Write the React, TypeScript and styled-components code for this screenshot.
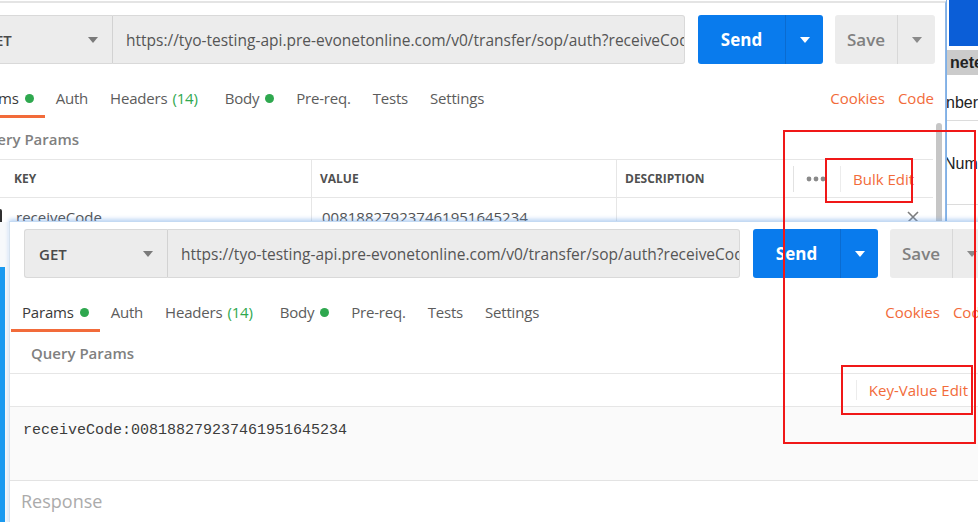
import React from 'react';
import styled, { createGlobalStyle } from 'styled-components';

const GlobalStyle = createGlobalStyle`
  html, body {
    margin: 0;
    padding: 0;
    background: #ffffff;
  }
  body {
    font-family: 'Open Sans', 'Noto Sans', sans-serif;
  }
`;

const ORANGE = '#f26b3a';
const GREEN = '#2fa84f';

const tabs = [
  { id: 'params', label: 'Params', dot: true },
  { id: 'auth', label: 'Auth' },
  { id: 'headers', label: 'Headers', count: 14 },
  { id: 'body', label: 'Body', dot: true },
  { id: 'prereq', label: 'Pre-req.' },
  { id: 'tests', label: 'Tests' },
  { id: 'settings', label: 'Settings' },
];

const requestUrl =
  'https://tyo-testing-api.pre-evonetonline.com/v0/transfer/sop/auth?receiveCode=008188279237461951645234';

const param = { key: 'receiveCode', value: '008188279237461951645234' };

// 요청 창 (위/아래 공통)
const RequestWindow: React.FC<{ front?: boolean; children: React.ReactNode }> = ({ front, children }) => (
  <Window $front={front}>
    <RequestBar>
      <MethodSelect>
        <MethodText>GET</MethodText>
        <Caret $color="#7a7a7a" />
      </MethodSelect>
      <UrlInput>{requestUrl}</UrlInput>
      <SendButton>
        <SendLabel>Send</SendLabel>
        <SplitPart $dark>
          <Caret $color="#ffffff" />
        </SplitPart>
      </SendButton>
      <SaveButton>
        <SaveLabel>Save</SaveLabel>
        <SplitPart>
          <Caret $color="#8a8a8a" />
        </SplitPart>
      </SaveButton>
    </RequestBar>

    <TabBar>
      <TabList>
        {tabs.map((tab) => (
          <Tab key={tab.id} $active={tab.id === 'params'}>
            {tab.label}
            {tab.count !== undefined && <Count>({tab.count})</Count>}
            {tab.dot && <Dot />}
          </Tab>
        ))}
      </TabList>
      <TabLinks>
        <LinkText>Cookies</LinkText>
        <LinkText>Code</LinkText>
      </TabLinks>
    </TabBar>

    <SectionTitle>Query Params</SectionTitle>
    {children}
  </Window>
);

const ParamsTable: React.FC = () => (
  <Table>
    <HeadCell />
    <HeadCell $line>KEY</HeadCell>
    <HeadCell $line>VALUE</HeadCell>
    <HeadCell>DESCRIPTION</HeadCell>
    <ActionsCell>
      <ShortRule />
      <MoreDots width="20" height="6" viewBox="0 0 20 6">
        <circle cx="3" cy="3" r="2.4" />
        <circle cx="10" cy="3" r="2.4" />
        <circle cx="17" cy="3" r="2.4" />
      </MoreDots>
      <ShortRule $light />
      <LinkText>Bulk Edit</LinkText>
    </ActionsCell>

    <RowCell $center>
      <Checkbox />
    </RowCell>
    <RowCell $line>{param.key}</RowCell>
    <RowCell $line>{param.value}</RowCell>
    <RowCell />
    <RowCell $end>
      <svg width="12" height="12" viewBox="0 0 12 12">
        <path d="M1 1L11 11M11 1L1 11" stroke="#7c7c7c" strokeWidth="1.6" />
      </svg>
    </RowCell>
  </Table>
);

const BulkEditor: React.FC = () => (
  <>
    <BulkToolbar>
      <ShortRule $light />
      <LinkText>Key-Value Edit</LinkText>
    </BulkToolbar>
    <BulkText>
      {param.key}:{param.value}
    </BulkText>
    <ResponseTitle>Response</ResponseTitle>
  </>
);

const App: React.FC = () => (
  <>
    <GlobalStyle />
    <Desktop>
      <BackSlot>
        <RequestWindow>
          <ParamsTable />
        </RequestWindow>
        <Scrollbar />
      </BackSlot>

      <SideWindow>
        <SideTitle />
        <SideHeader>nete</SideHeader>
        <SideRow $height={46} $top={18} $shift={-1}>nber</SideRow>
        <SideRow $height={84} $top={33} $shift={-3}>Num</SideRow>
      </SideWindow>

      <LeftGap>
        <BlueStrip />
      </LeftGap>

      <FrontSlot>
        <RequestWindow front>
          <BulkEditor />
        </RequestWindow>
      </FrontSlot>

      <Annotation $x={783} $y={130} $w={193} $h={314} />
      <Annotation $x={825} $y={158} $w={88} $h={45} />
      <Annotation $x={841} $y={365} $w={132} $h={50} />
    </Desktop>
  </>
);

/* 데스크톱 (창들이 겹쳐 있는 화면) */
const Desktop = styled.div`
  position: relative;
  width: 978px;
  height: 522px;
  overflow: hidden;
  background: #ffffff;
`;

const BackSlot = styled.div`
  position: absolute;
  left: -45px;
  top: 1px;
  height: 221px;
  overflow: hidden;
`;

const FrontSlot = styled.div`
  position: absolute;
  left: 9px;
  top: 221px;
  height: 320px;
`;

const Window = styled.div<{ $front?: boolean }>`
  width: 991px;
  box-sizing: border-box;
  background: #ffffff;
  border-top: ${({ $front }) => ($front ? '1px solid #c4daf3' : '2px solid #e4e4e4')};
  border-right: ${({ $front }) => ($front ? 'none' : '1px solid #8db6e6')};
  border-left: ${({ $front }) => ($front ? '1px solid #d6e2ee' : 'none')};
  padding-top: ${({ $front }) => ($front ? 7 : 12)}px;
  height: ${({ $front }) => ($front ? '320px' : '240px')};
  box-shadow: ${({ $front }) => ($front ? '0 -2px 4px rgba(110, 165, 230, 0.45)' : 'none')};
`;

const Scrollbar = styled.div`
  position: absolute;
  left: 981px;
  top: 122px;
  width: 6px;
  height: 110px;
  border-radius: 3px;
  background: #c6c6c6;
`;

/* 요청 바 */
const RequestBar = styled.div`
  display: flex;
  align-items: stretch;
  height: 49px;
  padding: 0 11px 0 14px;
`;

const MethodSelect = styled.div`
  flex: none;
  width: 144px;
  box-sizing: border-box;
  display: flex;
  align-items: center;
  justify-content: space-between;
  padding: 0 14px;
  background: #ececec;
  border: 1px solid #d9d9d9;
  border-right: 1px solid #d2d2d2;
  border-radius: 3px 0 0 3px;
`;

const MethodText = styled.span`
  font-size: 15px;
  font-weight: 600;
  color: #4a4a4a;
`;

const Caret = styled.span<{ $color: string }>`
  width: 0;
  height: 0;
  border-left: 5px solid transparent;
  border-right: 5px solid transparent;
  border-top: 6px solid ${({ $color }) => $color};
`;

const UrlInput = styled.div`
  flex: none;
  width: 572px;
  box-sizing: border-box;
  display: flex;
  align-items: center;
  padding: 0 2px 0 13px;
  background: #ececec;
  border: 1px solid #d9d9d9;
  border-left: none;
  border-radius: 0 3px 3px 0;
  font-size: 15.5px;
  color: #555555;
  white-space: nowrap;
  overflow: hidden;
`;

const SendButton = styled.div`
  flex: none;
  width: 125px;
  margin-left: 13px;
  display: flex;
  background: #097bed;
  border-radius: 3px;
`;

const SendLabel = styled.span`
  width: 87px;
  display: flex;
  align-items: center;
  justify-content: center;
  color: #ffffff;
  font-size: 17px;
  font-weight: 700;
`;

const SplitPart = styled.span<{ $dark?: boolean }>`
  flex: 1;
  display: flex;
  align-items: center;
  justify-content: center;
  border-left: 1px solid ${({ $dark }) => ($dark ? '#0a6bd0' : '#d8d8d8')};
`;

const SaveButton = styled.div`
  flex: none;
  width: 100px;
  margin-left: 12px;
  display: flex;
  background: #ececec;
  border-radius: 3px;
`;

const SaveLabel = styled.span`
  width: 62px;
  display: flex;
  align-items: center;
  justify-content: center;
  color: #808080;
  font-size: 17px;
  font-weight: 600;
`;

/* 탭 */
const TabBar = styled.div`
  display: flex;
  justify-content: space-between;
  margin-top: 20px;
  padding: 0 11px 0 1px;
`;

const TabList = styled.div`
  display: flex;
`;

const Tab = styled.div<{ $active?: boolean }>`
  display: flex;
  align-items: center;
  padding: 4px 11px 7px;
  border-bottom: 3px solid ${({ $active }) => ($active ? ORANGE : 'transparent')};
  font-size: 15px;
  line-height: 20px;
  letter-spacing: -0.2px;
  color: ${({ $active }) => ($active ? '#3a3a3a' : '#5c5c5c')};
  white-space: nowrap;
`;

const Count = styled.span`
  margin-left: 5px;
  margin-right: 5px;
  color: ${GREEN};
`;

const Dot = styled.span`
  width: 9px;
  height: 9px;
  margin-left: 6px;
  border-radius: 50%;
  background: ${GREEN};
`;

const TabLinks = styled.div`
  display: flex;
  gap: 13px;
  padding-top: 4px;
  line-height: 20px;
`;

const LinkText = styled.span`
  font-size: 15px;
  line-height: 20px;
  color: ${ORANGE};
  white-space: nowrap;
`;

const SectionTitle = styled.div`
  padding: 11px 0 10px 21px;
  font-size: 15px;
  font-weight: 600;
  line-height: 20px;
  color: #808080;
  border-bottom: 1px solid #e6e6e6;
  width: 978px;
  box-sizing: border-box;
`;

/* 키-값 테이블 */
const Table = styled.div`
  display: grid;
  grid-template-columns: 51px 306px 305px 176px 140px;
  width: 978px;
`;

const HeadCell = styled.div<{ $line?: boolean }>`
  height: 37px;
  display: flex;
  align-items: center;
  padding-left: 8px;
  border-bottom: 1px solid #e6e6e6;
  border-right: ${({ $line }) => ($line ? '1px solid #e6e6e6' : 'none')};
  font-size: 12px;
  font-weight: 700;
  color: #505050;
`;

const ActionsCell = styled.div`
  height: 37px;
  display: flex;
  align-items: center;
  border-bottom: 1px solid #e6e6e6;
  font-size: 15px;

  & > svg {
    margin: 0 14px 0 12px;
  }

  & > span:last-child {
    margin-left: 12px;
  }
`;

const ShortRule = styled.span<{ $light?: boolean }>`
  width: 1px;
  height: 26px;
  background: ${({ $light }) => ($light ? '#ececec' : '#e2e2e2')};
`;

const MoreDots = styled.svg`
  fill: #8a8a8a;
`;

const RowCell = styled.div<{ $line?: boolean; $center?: boolean; $end?: boolean }>`
  height: 37px;
  display: flex;
  align-items: center;
  justify-content: ${({ $center, $end }) => ($center || $end ? 'flex-end' : 'flex-start')};
  padding: 0 ${({ $center, $end }) => ($center ? 4 : $end ? 14 : 0)}px 0 ${({ $center, $end }) => ($center || $end ? 0 : 10)}px;
  border-right: ${({ $line }) => ($line ? '1px solid #e6e6e6' : 'none')};
  font-size: 15px;
  color: #505050;
  white-space: nowrap;
`;

const Checkbox = styled.span`
  width: 16px;
  height: 16px;
  border-radius: 2px;
  background: #303030;
`;

/* 벌크 편집 */
const BulkToolbar = styled.div`
  width: 978px;
  box-sizing: border-box;
  height: 33px;
  display: flex;
  align-items: center;
  justify-content: flex-end;
  gap: 12px;
  padding-right: 20px;
  border-bottom: 1px solid #e6e6e6;

  & > span:first-child {
    height: 20px;
  }
`;

const BulkText = styled.div`
  width: 978px;
  height: 74px;
  box-sizing: border-box;
  padding: 14px 14px 0 13px;
  background: #fafafa;
  border-bottom: 1px solid #e3e3e3;
  font-family: 'Liberation Mono', 'DejaVu Sans Mono', monospace;
  font-size: 15px;
  line-height: 20px;
  color: #3c3c3c;
`;

const ResponseTitle = styled.div`
  padding: 9px 11px;
  font-size: 18px;
  line-height: 22px;
  color: #ababab;
`;

/* 오른쪽 뒤 창 */
const SideWindow = styled.div`
  position: absolute;
  left: 946px;
  top: 0;
  width: 32px;
  height: 222px;
  overflow: hidden;
  background: #ffffff;
  border-left: 1px solid #7fb0e6;
  font-family: 'Liberation Sans', 'DejaVu Sans', sans-serif;
  font-size: 16px;
  color: #222222;
`;

const SideTitle = styled.div`
  height: 46px;
  margin-left: 2px;
  background: #0b5ed7;
`;

const SideHeader = styled.div`
  margin-top: 4px;
  height: 25px;
  display: flex;
  align-items: center;
  padding-left: 3px;
  background: #cbcbcb;
  font-weight: 700;
  white-space: nowrap;
`;

const SideRow = styled.div<{ $height: number; $top: number; $shift: number }>`
  height: ${({ $height }) => $height}px;
  box-sizing: border-box;
  padding-top: ${({ $top }) => $top}px;
  margin-left: ${({ $shift }) => $shift}px;
  line-height: 20px;
  border-bottom: 1px solid #dcdcdc;
  white-space: nowrap;
`;

/* 왼쪽 틈 */
const LeftGap = styled.div`
  position: absolute;
  left: 0;
  top: 222px;
  width: 8px;
  height: 300px;
  background: #f7f9fb;
`;

const BlueStrip = styled.div`
  margin-top: 45px;
  width: 5px;
  height: 255px;
  background: #1a9af0;
`;

/* 빨간 주석 상자 */
const Annotation = styled.div<{ $x: number; $y: number; $w: number; $h: number }>`
  position: absolute;
  left: ${({ $x }) => $x}px;
  top: ${({ $y }) => $y}px;
  width: ${({ $w }) => $w}px;
  height: ${({ $h }) => $h}px;
  box-sizing: border-box;
  border: 2px solid #f01818;
  pointer-events: none;
`;

export default App;
